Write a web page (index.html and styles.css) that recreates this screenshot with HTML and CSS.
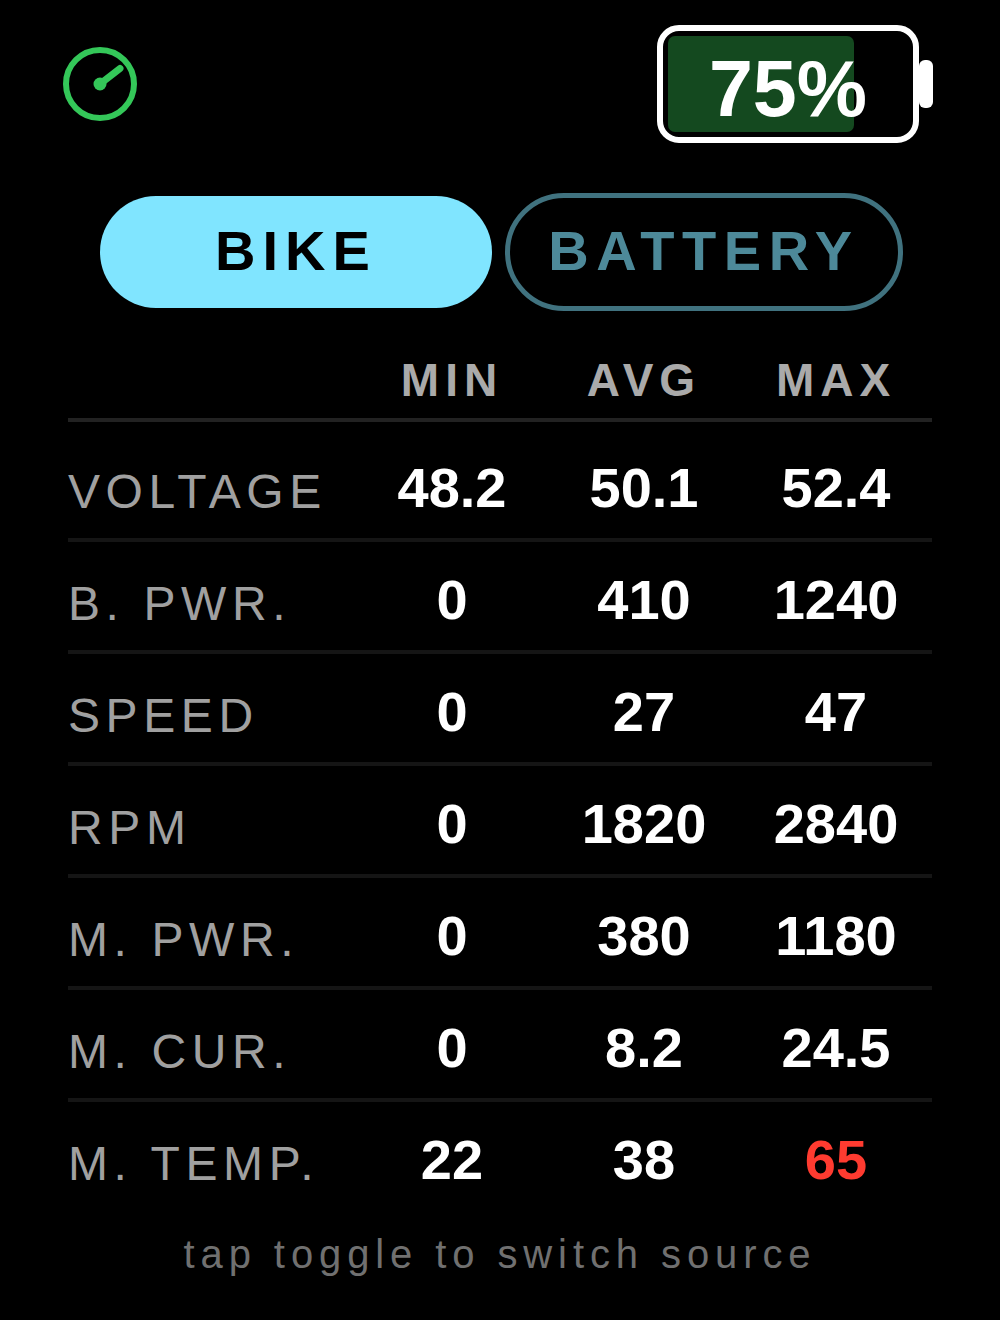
FILE: index.html
```html
<!DOCTYPE html>
<html lang="en">
<head>
  <meta charset="UTF-8" />
  <title>Ride Stats</title>
  <meta name="viewport" content="width=device-width, initial-scale=1.0"/>
  <link rel="stylesheet" href="styles.css">
</head>
<body>
  <div class="top">
    <svg class="gauge" width="74" height="74" viewBox="0 0 74 74" fill="none">
      <circle cx="37" cy="37" r="34" stroke="#34c759" stroke-width="6"/>
      <circle cx="37" cy="37" r="6.5" fill="#34c759"/>
      <path d="M37 37 L57 21.5" stroke="#34c759" stroke-width="7" stroke-linecap="round"/>
    </svg>
    <div class="battery">
      <div class="battery-body">
        <div class="battery-fill"></div>
        <span class="battery-text">75%</span>
      </div>
      <div class="battery-nub"></div>
    </div>
  </div>

  <div class="tabs">
    <button class="tab active">BIKE</button>
    <button class="tab">BATTERY</button>
  </div>

  <div class="row head">
    <span></span>
    <span>MIN</span>
    <span>AVG</span>
    <span>MAX</span>
  </div>

  <div class="rows">
    <div class="row"><span class="label">VOLTAGE</span><span>48.2</span><span>50.1</span><span>52.4</span></div>
    <div class="row"><span class="label">B. PWR.</span><span>0</span><span>410</span><span>1240</span></div>
    <div class="row"><span class="label">SPEED</span><span>0</span><span>27</span><span>47</span></div>
    <div class="row"><span class="label">RPM</span><span>0</span><span>1820</span><span>2840</span></div>
    <div class="row"><span class="label">M. PWR.</span><span>0</span><span>380</span><span>1180</span></div>
    <div class="row"><span class="label">M. CUR.</span><span>0</span><span>8.2</span><span>24.5</span></div>
    <div class="row"><span class="label">M. TEMP.</span><span>22</span><span>38</span><span class="hot">65</span></div>
  </div>

  <p class="hint">tap toggle to switch source</p>
</body>
</html>
```

FILE: styles.css
```css
* {
  box-sizing: border-box;
}

html, body {
  height: 100%;
}

body {
  font-family: "Liberation Sans", Arial, sans-serif;
  background-color: #000;
  color: #fff;
  margin: 0;
  padding: 25px 68px 0;
  overflow: hidden;
}

/* top bar */
.top {
  display: flex;
  justify-content: space-between;
  align-items: center;
  height: 118px;
}

.gauge {
  margin-left: -5px;
}

.battery {
  display: flex;
  align-items: center;
  margin-right: -1px;
}

.battery-body {
  position: relative;
  display: flex;
  align-items: center;
  justify-content: center;
  width: 262px;
  height: 118px;
  padding-top: 10px;
  border: 6px solid #fff;
  border-radius: 22px;
}

.battery-fill {
  position: absolute;
  left: 5px;
  top: 5px;
  bottom: 5px;
  width: 186px;
  background-color: #14491f;
  border-radius: 7px;
}

.battery-text {
  position: relative;
  font-size: 79px;
  font-weight: bold;
}

.battery-nub {
  width: 14px;
  height: 48px;
  background-color: #fff;
  border-radius: 6px;
}

/* source toggle */
.tabs {
  display: flex;
  align-items: center;
  gap: 13px;
  margin: 50px 0 0 32px;
}

.tab {
  font-family: inherit;
  font-size: 56px;
  font-weight: bold;
  letter-spacing: 7px;
  width: 392px;
  height: 112px;
  padding: 0 0 4px;
  border: none;
  border-radius: 56px;
  background-color: #80e5ff;
  color: #000;
}

.tab:not(.active) {
  width: 398px;
  height: 118px;
  letter-spacing: 7.6px;
  border-radius: 59px;
  border: 5px solid #40727f;
  background: none;
  color: #4d8999;
}

/* stats table */
.row {
  display: grid;
  grid-template-columns: 1fr 192px 192px 192px;
  align-items: center;
  height: 112px;
  padding-top: 6px;
  border-bottom: 4px solid #151515;
  font-size: 56px;
  font-weight: bold;
  text-align: center;
}

.row:last-child {
  border-bottom-color: transparent;
}

.head {
  height: 111px;
  padding-top: 30px;
  border-bottom-color: #222;
  font-size: 46px;
  letter-spacing: 6px;
  color: #aaa;
}

.rows {
  padding-top: 8px;
}

.label {
  padding-top: 8px;
  font-size: 48px;
  font-weight: normal;
  letter-spacing: 5.6px;
  text-align: left;
  color: #a0a0a0;
}

.hot {
  color: #ff3b30;
}

.hint {
  margin: 18px 0 0;
  font-size: 40px;
  letter-spacing: 5.9px;
  text-align: center;
  color: #707070;
}
```
